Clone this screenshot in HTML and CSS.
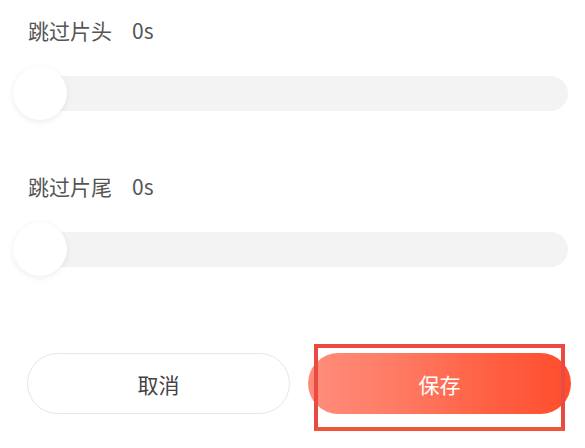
FILE: index.html
```html
<!DOCTYPE html>
<html lang="zh-CN">
<head>
<meta charset="utf-8">
<title>跳过片头片尾</title>
<link rel="stylesheet" href="styles.css">
</head>
<body>
<div class="page">
  <section class="setting">
    <div class="label">跳过片头<span class="val">0s</span></div>
    <div class="slider">
      <div class="track"></div>
      <div class="thumb"></div>
    </div>
  </section>
  <section class="setting second">
    <div class="label">跳过片尾<span class="val">0s</span></div>
    <div class="slider">
      <div class="track"></div>
      <div class="thumb"></div>
    </div>
  </section>
  <div class="actions">
    <button class="btn cancel">取消</button>
    <button class="btn save">保存<span class="highlight"></span></button>
  </div>
</div>
</body>
</html>
```
FILE: styles.css
```css
html, body {
  margin: 0;
  padding: 0;
  background: #ffffff;
}
body {
  font-family: "Noto Sans CJK SC", "Noto Sans", sans-serif;
  width: 585px;
  height: 448px;
  overflow: hidden;
}
.page {
  padding-top: 15px;
  display: flex;
  flex-direction: column;
}
.setting {
  display: flex;
  flex-direction: column;
}
.setting.second {
  margin-top: 51px;
}
.label {
  padding-left: 28px;
  font-size: 21px;
  line-height: 30px;
  height: 30px;
  color: #555555;
}
.val {
  margin-left: 20px;
}
.slider {
  position: relative;
  margin: 21px 17px 0 13px;
  height: 54px;
  display: flex;
  align-items: center;
}
.track {
  flex: 1;
  height: 35px;
  margin-left: 1px;
  border-radius: 18px;
  background: #f3f3f3;
}
.thumb {
  position: absolute;
  left: 0;
  top: 0;
  width: 54px;
  height: 54px;
  border-radius: 50%;
  background: #ffffff;
  box-shadow: 0 2px 6px rgba(0, 0, 0, 0.07), 0 0 1px rgba(0, 0, 0, 0.04);
}
.actions {
  margin-top: 77px;
  padding-left: 27px;
  display: flex;
  gap: 18px;
}
.btn {
  width: 263px;
  height: 61px;
  border-radius: 31px;
  font-family: "Noto Sans CJK SC", "Noto Sans", sans-serif;
  font-size: 21px;
  padding: 0;
  display: flex;
  align-items: center;
  justify-content: center;
  box-sizing: border-box;
}
.cancel {
  background: #ffffff;
  border: 1.5px solid #e6e6e6;
  color: #444444;
}
.save {
  position: relative;
  border: none;
  color: #ffffff;
  background: linear-gradient(90deg, #ff8d7c 0%, #ff7a63 35%, #ff5f43 70%, #ff4e2c 100%);
}
.highlight {
  position: absolute;
  left: 6px;
  right: 6px;
  top: -9px;
  bottom: -17px;
  border: 4px solid #eb4a40;
  border-bottom-color: #ee5638;
}
```
